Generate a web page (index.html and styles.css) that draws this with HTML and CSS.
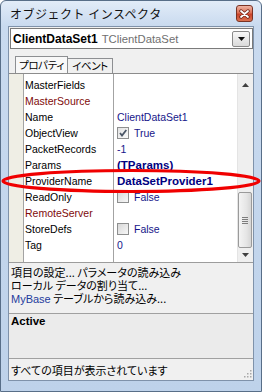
FILE: index.html
```html
<!DOCTYPE html>
<html lang="ja">
<head>
<meta charset="utf-8">
<title>オブジェクト インスペクタ</title>
<link rel="stylesheet" href="styles.css">
</head>
<body>
<div class="window">
  <div class="titlebar">
    <span class="title">オブジェクト インスペクタ</span>
    <div class="close">
      <svg width="11" height="10" viewBox="0 0 11 10"><path d="M2 2 L9 8 M9 2 L2 8" stroke="#6a2417" stroke-width="3.4" stroke-linecap="round"/><path d="M2 2 L9 8 M9 2 L2 8" stroke="#fff" stroke-width="1.8" stroke-linecap="round"/></svg>
    </div>
  </div>
  <div class="client">
    <div class="combo">
      <span class="obj">ClientDataSet1</span><span class="cls">TClientDataSet</span>
      <div class="drop"><svg width="7" height="4" viewBox="0 0 7 4"><path d="M0 0H7L3.5 4Z" fill="#111"/></svg></div>
    </div>
    <div class="tabs">
      <div class="tab active">プロパティ</div>
      <div class="tab second">イベント</div>
    </div>
    <div class="grid">
      <div class="rows">
        <div class="row"><div class="name">MasterFields</div><div class="val"></div></div>
        <div class="row"><div class="name ref">MasterSource</div><div class="val"></div></div>
        <div class="row"><div class="name">Name</div><div class="val">ClientDataSet1</div></div>
        <div class="row"><div class="name">ObjectView</div><div class="val"><span class="cb on"><svg width="10" height="10" viewBox="0 0 10 10"><path d="M2 5 L4 7.5 L8.3 2" fill="none" stroke="#4a5566" stroke-width="1.8"/></svg></span>True</div></div>
        <div class="row"><div class="name">PacketRecords</div><div class="val">-1</div></div>
        <div class="row"><div class="name">Params</div><div class="val"><b>(TParams)</b></div></div>
        <div class="row"><div class="name">ProviderName</div><div class="val"><b>DataSetProvider1</b></div></div>
        <div class="row"><div class="name">ReadOnly</div><div class="val"><span class="cb"></span>False</div></div>
        <div class="row"><div class="name ref">RemoteServer</div><div class="val"></div></div>
        <div class="row"><div class="name">StoreDefs</div><div class="val"><span class="cb"></span>False</div></div>
        <div class="row"><div class="name">Tag</div><div class="val">0</div></div>
      </div>
      <div class="vscroll">
        <div class="arrow up"><svg width="7" height="4" viewBox="0 0 7 4"><path d="M0 4H7L3.5 0Z" fill="#404040"/></svg></div>
        <div class="track">
          <div class="thumb"><span></span><span></span><span></span><span></span></div>
        </div>
        <div class="arrow down"><svg width="7" height="4" viewBox="0 0 7 4"><path d="M0 0H7L3.5 4Z" fill="#404040"/></svg></div>
      </div>
    </div>
    <div class="splitter"></div>
    <div class="hotlist">
      <div class="hl">項目の設定... パラメータの読み込み</div>
      <div class="hl">ローカル データの割り当て...</div>
      <div class="hl"><span class="link">MyBase</span> テーブルから読み込み...</div>
    </div>
    <div class="desc"><b>Active</b></div>
    <div class="status">
      <span>すべての項目が表示されています</span>
      <svg class="grip" width="8" height="8" viewBox="0 0 8 8"><g fill="#a8a8a8"><rect x="6" y="0" width="1.5" height="1.5"/><rect x="3" y="3" width="1.5" height="1.5"/><rect x="6" y="3" width="1.5" height="1.5"/><rect x="0" y="6" width="1.5" height="1.5"/><rect x="3" y="6" width="1.5" height="1.5"/><rect x="6" y="6" width="1.5" height="1.5"/></g></svg>
    </div>
  </div>
  <svg class="mark" width="262" height="392" viewBox="0 0 262 392"><ellipse cx="131" cy="181" rx="128" ry="10.5" fill="none" stroke="#f00000" stroke-width="3.2"/></svg>
</div>
</body>
</html>
```

FILE: styles.css
```css
* { box-sizing: border-box; }
html, body { margin: 0; padding: 0; }
body {
  width: 262px;
  height: 392px;
  overflow: hidden;
  background: #fff;
  font-family: "Liberation Sans", Arial, sans-serif;
  font-size: 10.5px;
  color: #000;
}
.window {
  position: relative;
  width: 262px;
  height: 392px;
  border: 1px solid #586e88;
  border-radius: 6px 6px 0 0;
  background: linear-gradient(180deg, #e2ecf8 0px, #c9daef 25px, #bed2ea 100%);
  display: flex;
  flex-direction: column;
  padding: 0 7px 10px;
}
.titlebar {
  height: 25px;
  display: flex;
  align-items: center;
  justify-content: space-between;
  padding-left: 2px;
}
.title {
  font-family: "Noto Sans CJK JP", sans-serif;
  font-size: 12px;
  letter-spacing: 0.5px;
  color: #111;
}
.close {
  width: 17px;
  height: 17px;
  margin-right: 1px;
  border: 1px solid #7a3324;
  border-radius: 3px;
  background: linear-gradient(180deg, #eeb3a2 0%, #dd7055 45%, #c9432a 55%, #dc7250 100%);
  display: flex;
  align-items: center;
  justify-content: center;
}
.client {
  flex: 1;
  border: 1px solid #7f92aa;
  background: #f0f0f0;
  display: flex;
  flex-direction: column;
}
.combo {
  margin: 1px 0 0 1px;
  height: 21px;
  border: 1px solid #7b7b7b;
  background: #fff;
  display: flex;
  align-items: center;
  padding-left: 2px;
}
.obj { font-weight: bold; font-size: 12px; }
.cls { color: #707070; font-size: 11.3px; margin-left: 4px; }
.drop {
  margin-left: auto;
  margin-right: 2px;
  width: 18px;
  height: 16px;
  border: 1px solid #8a8a8a;
  border-radius: 2px;
  background: linear-gradient(180deg, #f8f8f8, #dadada);
  display: flex;
  align-items: center;
  justify-content: center;
}
.tabs {
  height: 24px;
  display: flex;
  align-items: flex-end;
  padding-left: 6px;
}
.tab {
  font-family: "Noto Sans CJK JP", sans-serif;
  font-feature-settings: "palt";
  font-size: 10.5px;
  letter-spacing: -0.4px;
  width: 53px;
  height: 15px;
  line-height: 14px;
  text-align: center;
  white-space: nowrap;
  overflow: hidden;
  border: 1px solid #8d8f92;
  border-bottom: none;
  background: #f0f0f0;
}
.tab.second { width: 45px; border-left: none; }
.tab.active {
  height: 17px;
  line-height: 16px;
  background: #f8f8f8;
}
.grid {
  height: 189px;
  border-top: 1px solid #8c8c8c;
  display: flex;
  background: #fff;
}
.rows {
  flex: 1;
  padding: 3px 0 0 15px;
  background: linear-gradient(90deg, #efeee5 0 14px, #a3a3a3 14px 15px, #fff 15px 104px, #a3a3a3 104px 105px, #fff 105px);
  overflow: hidden;
}
.row {
  height: 16px;
  display: flex;
  align-items: center;
}
.name {
  width: 89px;
  padding-left: 1px;
  white-space: nowrap;
}
.name.ref { color: #7e0a0a; }
.val {
  margin-left: 1px;
  padding-left: 3px;
  color: #16168a;
  display: flex;
  align-items: center;
  white-space: nowrap;
}
.val b { font-size: 11.5px; color: #000080; }
.cb {
  width: 12px;
  height: 12px;
  margin-right: 5px;
  border: 1px solid #8e8f8f;
  background: linear-gradient(135deg, #d8d8d8, #f7f7f7);
  display: inline-flex;
  align-items: center;
  justify-content: center;
}
.cb.on { background: linear-gradient(135deg, #e2e2e2, #fafafa); }
.vscroll {
  width: 16px;
  background: #efefef;
  border-left: 1px solid #e4e4e4;
  display: flex;
  flex-direction: column;
}
.arrow {
  display: flex;
  align-items: center;
  justify-content: center;
}
.arrow.up { height: 22px; }
.arrow.down { height: 14px; }
.track {
  flex: 1;
  display: flex;
  flex-direction: column;
  justify-content: flex-end;
  padding: 0 1px 0 0;
}
.thumb {
  height: 56px;
  border: 1px solid #9a9a9a;
  border-radius: 2px;
  background: linear-gradient(90deg, #f4f4f4, #e6e6e6 60%, #d6d6d6);
  display: flex;
  flex-direction: column;
  align-items: center;
  justify-content: center;
  gap: 1px;
}
.thumb span {
  width: 6px;
  height: 1px;
  background: #7c7c7c;
}
.splitter {
  height: 2px;
  border-top: 1px solid #9c9c9c;
}
.hotlist {
  height: 49px;
  padding: 2px 0 0 2px;
  font-family: "Noto Sans CJK JP", sans-serif;
  font-feature-settings: "palt";
  font-size: 11px;
  white-space: nowrap;
  overflow: hidden;
  background: #f0f0f0;
}
.hl {
  height: 13px;
  line-height: 13px;
}
.link {
  font-family: "Liberation Sans", Arial, sans-serif;
  font-size: 11px;
  color: #1f3c9e;
}
.desc {
  height: 45px;
  border-top: 1px solid #a0a0a0;
  background: #ebebeb;
  padding-left: 2px;
  line-height: 14px;
}
.desc b { font-size: 11.5px; }
.status {
  height: 22px;
  border-top: 1px solid #a0a0a0;
  display: flex;
  align-items: center;
  justify-content: space-between;
  padding: 0 1px 0 2px;
  font-family: "Noto Sans CJK JP", sans-serif;
  font-feature-settings: "palt";
  font-size: 11px;
}
.grip { align-self: flex-end; margin-bottom: 2px; }
.mark {
  position: absolute;
  left: -1px;
  top: -1px;
  pointer-events: none;
}
```
